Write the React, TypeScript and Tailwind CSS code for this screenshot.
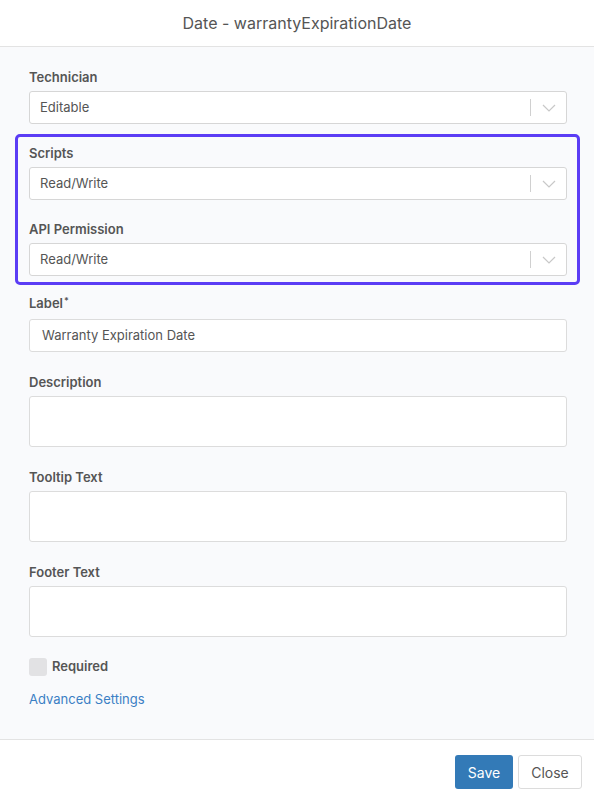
const font = { fontFamily: "Inter, 'Noto Sans', sans-serif" };

function Chevron() {
  return (
    <svg width="14" height="8" viewBox="0 0 14 8" fill="none">
      <path d="M1 1l6 6 6-6" stroke="#c8c8c8" strokeWidth="1.2" />
    </svg>
  );
}

function SelectField({ label, value }: { label: string; value: string }) {
  return (
    <div>
      <div className="h-5 leading-5 text-[13px] font-semibold text-[#555] mb-1">{label}</div>
      <div className="h-[33px] bg-white border border-[#d6d6d6] rounded-[3px] flex items-center">
        <div className="flex-1 pl-[10px] text-[13px] text-[#555]">{value}</div>
        <div className="w-px h-[17px] bg-[#d0d0d0]" />
        <div className="w-[35px] flex justify-center">
          <Chevron />
        </div>
      </div>
    </div>
  );
}

function TextField({ label, value, tall, required }: { label: string; value?: string; tall?: boolean; required?: boolean }) {
  return (
    <div>
      <div className={(tall ? "mb-1" : "mb-[6px]") + " h-5 leading-5 text-[13px] font-semibold text-[#555]"}>
        {label}
        {required && <sup className="text-[9px] ml-px">*</sup>}
      </div>
      <div
        className={
          (tall ? "h-[51px]" : "h-[33px]") +
          " bg-white border border-[#dcdcdc] rounded-[3px] flex items-center pl-[12px] text-[13px] text-[#555]"
        }
      >
        {value}
      </div>
    </div>
  );
}

export default function App() {
  return (
    <div className="w-[594px] h-[803px] flex flex-col bg-white" style={font}>
      <div className="h-[47px] border-b border-[#e3e3e3] flex items-center justify-center text-[16px] text-[#555]">
        Date - warrantyExpirationDate
      </div>

      <div className="flex-1 bg-[#f9fafc] pt-5 pl-[29px] pr-[27px] border-b border-[#e3e3e3]">
        <SelectField label="Technician" value="Editable" />

        <div className="-ml-[14px] -mr-[13px] mt-[10px] mb-[8px] border-[3px] border-[#5b3df5] rounded-[5px] pl-[11px] pr-[10px] pt-[6px] pb-[6px] flex flex-col gap-[19px]">
          <SelectField label="Scripts" value="Read/Write" />
          <SelectField label="API Permission" value="Read/Write" />
        </div>

        <div className="flex flex-col gap-[20px]">
          <TextField label="Label" value="Warranty Expiration Date" required />
          <TextField label="Description" tall />
          <TextField label="Tooltip Text" tall />
          <TextField label="Footer Text" tall />
        </div>

        <div className="mt-[20px] flex items-center gap-[5px]">
          <div className="w-[18px] h-[18px] rounded-[3px] bg-[#e2e2e4]" />
          <span className="text-[13px] font-semibold text-[#555]">Required</span>
        </div>

        <div className="mt-[13px] text-[13px] text-[#3b7fc4]">Advanced Settings</div>
      </div>

      <div className="h-[63px] flex items-start justify-end pt-[15px] pr-[12px] gap-[5px]">
        <button className="w-[58px] h-[34px] rounded-[3px] bg-[#337ab7] text-white text-[14px]">Save</button>
        <button className="w-[64px] h-[34px] rounded-[3px] bg-white border border-[#dcdcdc] text-[#555] text-[14px]">
          Close
        </button>
      </div>
    </div>
  );
}
